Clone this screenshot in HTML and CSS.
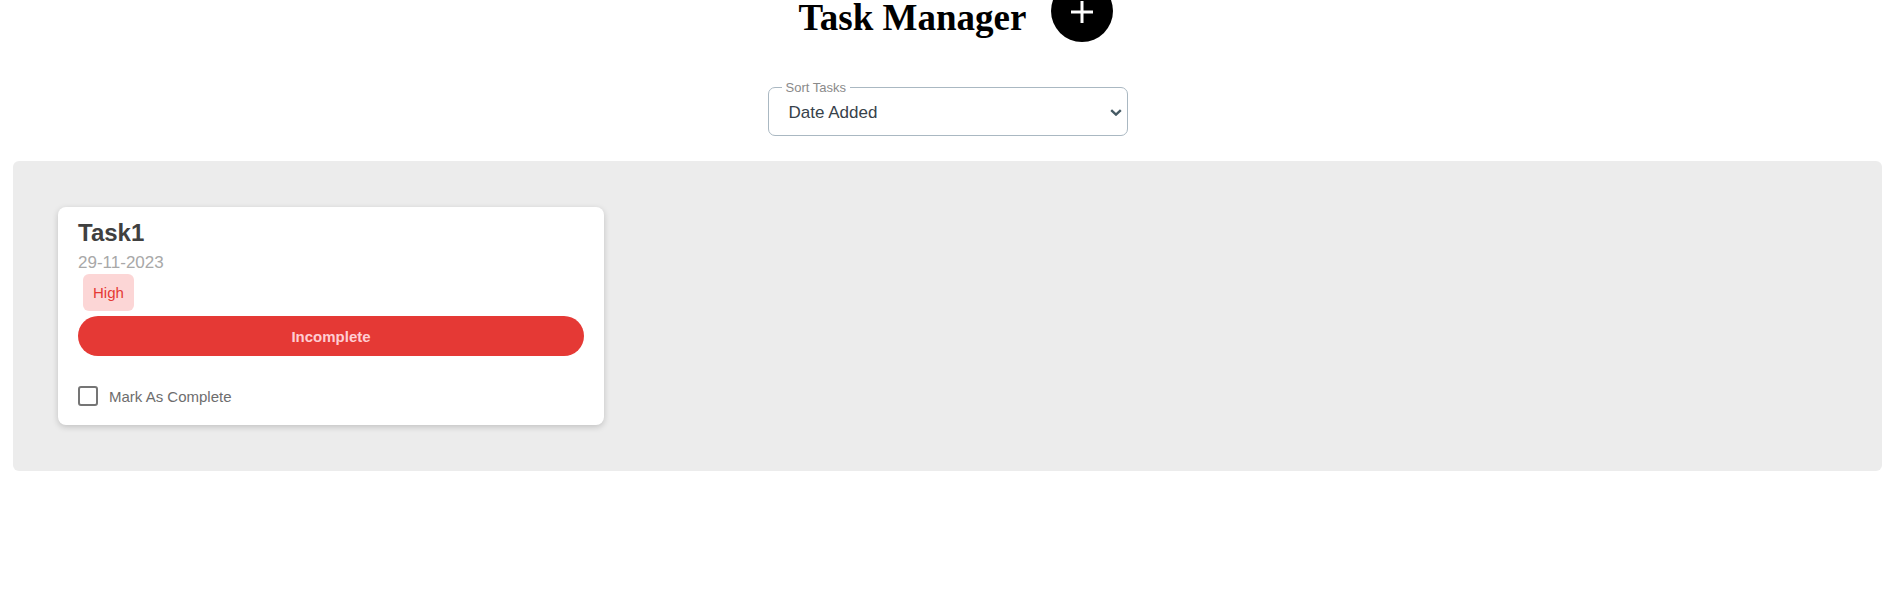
FILE: index.html
```html
<!DOCTYPE html>
<html lang="en">
<head>
<meta charset="utf-8">
<title>Task Manager</title>
<link rel="stylesheet" href="styles.css">
</head>
<body>
<header class="header">
  <h1 class="title">Task Manager</h1>
  <button class="add-btn" type="button" aria-label="Add task">
    <svg class="add-icon" viewBox="0 0 24 24" width="24" height="24"><path d="M12 1v22M1 12h22" stroke="#fff" stroke-width="3" fill="none"/></svg>
  </button>
</header>

<fieldset class="sort">
  <legend class="sort-label">Sort Tasks</legend>
  <div class="sort-row">
    <select class="sort-select">
      <option>Date Added</option>
      <option>Priority</option>
    </select>
    <svg class="chevron" viewBox="0 0 12 7" width="12" height="7"><path d="M1.2 1.2 6 5.6 10.8 1.2" stroke="#455a64" stroke-width="2.4" fill="none"/></svg>
  </div>
</fieldset>

<main class="board">
  <article class="card">
    <h2 class="card-title">Task1</h2>
    <div class="card-date">29-11-2023</div>
    <span class="badge">High</span>
    <button class="status-btn" type="button">Incomplete</button>
    <label class="check-row">
      <span class="checkbox"></span>
      <span class="check-label">Mark As Complete</span>
    </label>
  </article>
</main>
</body>
</html>
```

FILE: styles.css
```css
html, body {
  margin: 0;
  padding: 0;
  background: #fff;
}

body {
  font-family: "Liberation Sans", Arial, sans-serif;
}

.header {
  display: flex;
  justify-content: center;
  align-items: flex-start;
  gap: 25px;
  padding-left: 29px;
  margin-top: -3px;
  height: 45px;
}

.title {
  margin: 0;
  font-family: "Liberation Serif", "Times New Roman", serif;
  font-weight: bold;
  font-size: 37px;
  line-height: 42px;
  color: #000;
}

.add-btn {
  margin-top: -17px;
  width: 62px;
  height: 62px;
  border: none;
  border-radius: 50%;
  background: #000;
  padding: 0;
  display: flex;
  align-items: center;
  justify-content: center;
}

.add-icon {
  display: block;
  margin-top: 1px;
}

.sort {
  box-sizing: border-box;
  width: 360px;
  margin: 38px auto 0;
  padding: 0;
  border: 1px solid #aab8c2;
  border-radius: 7px;
  position: relative;
  left: 6px;
}

.sort-label {
  margin-left: 13px;
  padding: 0 4px;
  font-size: 13px;
  line-height: 15px;
  color: #8a8a8a;
}

.sort-row {
  display: flex;
  align-items: center;
  height: 40px;
  padding: 0 5px 0 20px;
}

.sort-select {
  flex: 1;
  appearance: none;
  -webkit-appearance: none;
  border: none;
  outline: none;
  background: transparent;
  padding: 0;
  margin: 0;
  margin-top: -6px;
  font-family: "Liberation Sans", Arial, sans-serif;
  font-size: 17px;
  color: #37424a;
}

.chevron {
  display: block;
  margin-top: -6px;
}

.board {
  margin: 25px 1px 0 13px;
  background: #ececec;
  border-radius: 6px;
  padding: 46px 45px;
  height: 218px;
}

.card {
  width: 546px;
  box-sizing: border-box;
  background: #fff;
  border-radius: 8px;
  box-shadow: 0 2px 6px rgba(0, 0, 0, 0.18);
  padding: 12px 20px 19px;
  display: flex;
  flex-direction: column;
  align-items: flex-start;
}

.card-title {
  margin: 0;
  font-size: 24px;
  line-height: 28px;
  font-weight: bold;
  color: #404040;
}

.card-date {
  margin-top: 6px;
  font-size: 17px;
  line-height: 19px;
  color: #a8a8a8;
}

.badge {
  margin: 2px 0 0 5px;
  padding: 10px;
  font-size: 15px;
  line-height: 17px;
  color: #e53935;
  background: #fcd6d6;
  border-radius: 6px;
}

.status-btn {
  margin-top: 5px;
  align-self: stretch;
  height: 40px;
  border: none;
  border-radius: 20px;
  background: #e53935;
  color: #ffcdd2;
  font-family: "Liberation Sans", Arial, sans-serif;
  font-weight: bold;
  font-size: 15px;
  padding: 0;
}

.check-row {
  margin-top: 30px;
  display: flex;
  align-items: center;
  gap: 11px;
  height: 20px;
}

.checkbox {
  box-sizing: border-box;
  width: 20px;
  height: 20px;
  border: 2px solid #757575;
  border-radius: 3px;
}

.check-label {
  font-size: 15px;
  color: #6d6d6d;
}
```
